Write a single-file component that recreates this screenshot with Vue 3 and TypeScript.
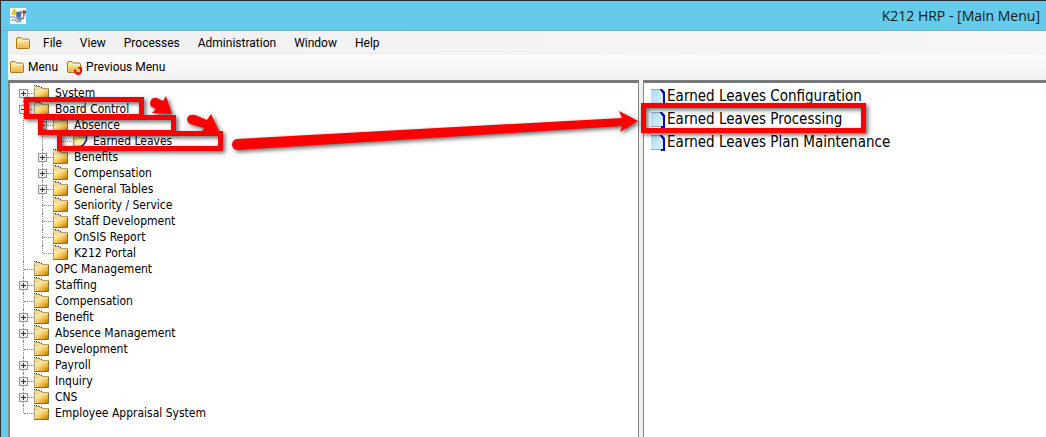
<script setup lang="ts">
interface TreeNode {
  label: string
  state?: 'open' | 'closed'
  children?: TreeNode[]
}

const menus: string[] = ['File', 'View', 'Processes', 'Administration', 'Window', 'Help']

const tree: TreeNode[] = [
  { label: 'System', state: 'closed' },
  {
    label: 'Board Control',
    state: 'open',
    children: [
      { label: 'Absence', state: 'open', children: [{ label: 'Earned Leaves' }] },
      { label: 'Benefits', state: 'closed' },
      { label: 'Compensation', state: 'closed' },
      { label: 'General Tables', state: 'closed' },
      { label: 'Seniority / Service' },
      { label: 'Staff Development' },
      { label: 'OnSIS Report' },
      { label: 'K212 Portal' },
    ],
  },
  { label: 'OPC Management' },
  { label: 'Staffing', state: 'closed' },
  { label: 'Compensation' },
  { label: 'Benefit', state: 'closed' },
  { label: 'Absence Management', state: 'closed' },
  { label: 'Development' },
  { label: 'Payroll', state: 'closed' },
  { label: 'Inquiry', state: 'closed' },
  { label: 'CNS', state: 'closed' },
  { label: 'Employee Appraisal System' },
]

const items: string[] = [
  'Earned Leaves Configuration',
  'Earned Leaves Processing',
  'Earned Leaves Plan Maintenance',
]
</script>

<template>
  <div class="window">
    <svg class="defs" width="0" height="0" aria-hidden="true">
      <defs>
        <linearGradient id="gold" x1="0" y1="0" x2="1" y2="1">
          <stop offset="0" stop-color="#fffbd8" />
          <stop offset="0.4" stop-color="#fbdc7c" />
          <stop offset="0.75" stop-color="#e5a62a" />
          <stop offset="1" stop-color="#b87400" />
        </linearGradient>
        <linearGradient id="soft" x1="0" y1="0" x2="0" y2="1">
          <stop offset="0" stop-color="#fff0a8" />
          <stop offset="1" stop-color="#e9b544" />
        </linearGradient>
        <linearGradient id="paper" x1="0" y1="0" x2="1" y2="1">
          <stop offset="0" stop-color="#acd6f8" />
          <stop offset="1" stop-color="#dff4ff" />
        </linearGradient>
        <symbol id="folder" viewBox="0 0 16 16">
          <path d="M.5 14V2.500L1.500 1.500H6L8 3.500H14.500V14Z" fill="#f3dc9a" stroke="#b39c68" />
          <path d="M1 14V6H6L8 4.500H14V14Z" fill="url(#gold)" />
          <path d="M0 14.500H14.500V4" fill="none" stroke="#85703c" />
          <path d="M0 .5H1M2 .5H3M5 1.500H6M7 2.500H8" stroke="#2222c8" />
        </symbol>
        <symbol id="folder-open" viewBox="0 0 16 16">
          <path d="M1.500 12V4L3 2.500H6L8 4H13V7L10 13H2Z" fill="#f3d56e" stroke="#a38d55" />
          <path d="M4 7L6 6H14L11 12L9 13H2Z" fill="#fff3ae" />
          <path d="M14.500 2.500V7L11.500 12L9 13.500H2" fill="none" stroke="#1313a8" stroke-width="1.500" />
        </symbol>
        <symbol id="folder-soft" viewBox="0 0 16 14">
          <path d="M1.500 12V3Q1.500 1.500 3 1.500H6L7.500 3H13Q14.500 3 14.500 4.500V11.500Q14.500 12.500 13.500 12.500H2Z" fill="url(#soft)" stroke="#a97a1c" />
          <path d="M2.500 5.500H6.500L8 4.500H13.500" fill="none" stroke="#fffadb" />
        </symbol>
        <symbol id="page" viewBox="0 0 14 16">
          <path d="M0 0H10L13 4V15H0Z" fill="url(#paper)" />
          <path d="M0 .5H9M0 14.500H11" stroke="#8faec6" />
          <path d="M9 0H11L14 3V16H10V14H12V5H9Z" fill="#0808b8" />
          <path d="M9 1V5H12Z" fill="#fff" />
        </symbol>
      </defs>
    </svg>

    <header class="titlebar">
      <svg class="app-icon" viewBox="0 0 16 16" aria-hidden="true">
        <path fill="#fff" d="M0 0H16V16H0Z" />
        <path d="M1 6L4 0L7 4L7 7L2 7Z" fill="#d8cf28" />
        <path d="M6 4L12 3L15 6L14 11L9 13L6 9Z" fill="#7b8a94" />
        <path d="M7 5L10 4L11 8L8 9Z" fill="#3268b4" />
        <path d="M11 6L13 5V9L11 10Z" fill="#e8eef0" />
        <path d="M13 2L16 3V6L13 5Z" fill="#e51c1c" />
        <path d="M0 9L5 9L8 13L12 14M1 12L5 12L8 15" fill="none" stroke="#4888d8" />
      </svg>
      <h1>K212 HRP - [Main Menu]</h1>
    </header>

    <div class="client">
      <nav class="menubar" aria-label="Main">
        <svg class="soft-folder" aria-hidden="true"><use href="#folder-soft" /></svg>
        <button v-for="m in menus" :key="m" type="button">{{ m }}</button>
      </nav>

      <div class="toolbar">
        <button type="button">
          <svg class="soft-folder" aria-hidden="true"><use href="#folder-soft" /></svg>Menu
        </button>
        <button type="button">
          <svg class="back-folder" viewBox="0 0 17 16" aria-hidden="true">
            <use href="#folder-soft" y="1" width="16" height="14" />
            <path d="M9.500 10.500A3 3 0 1 0 14.500 10" fill="none" stroke="#e81010" stroke-width="2" />
            <path d="M11 8H16V12Z" fill="#e81010" />
          </svg>Previous Menu
        </button>
      </div>

      <main class="panes">
        <section class="pane tree-pane" aria-label="Menu tree">
          <ul class="tree">
            <li v-for="a in tree" :key="a.label">
              <div class="row">
                <span class="branch"><button v-if="a.state" type="button" class="toggle" :class="a.state" :aria-label="'Toggle ' + a.label"></button></span>
                <svg class="folder" aria-hidden="true"><use href="#folder" /></svg>
                <span class="label">{{ a.label }}</span>
              </div>
              <ul v-if="a.children">
                <li v-for="b in a.children" :key="b.label">
                  <div class="row">
                    <span class="branch"><button v-if="b.state" type="button" class="toggle" :class="b.state" :aria-label="'Toggle ' + b.label"></button></span>
                    <svg class="folder" aria-hidden="true"><use href="#folder" /></svg>
                    <span class="label">{{ b.label }}</span>
                  </div>
                  <ul v-if="b.children">
                    <li v-for="c in b.children" :key="c.label">
                      <div class="row">
                        <span class="branch"></span>
                        <svg class="folder" aria-hidden="true"><use href="#folder-open" /></svg>
                        <span class="label">{{ c.label }}</span>
                      </div>
                    </li>
                  </ul>
                </li>
              </ul>
            </li>
          </ul>
        </section>
        <section class="pane list-pane" aria-label="Programs">
          <ul class="programs">
            <li v-for="i in items" :key="i">
              <svg class="page" aria-hidden="true"><use href="#page" /></svg>
              <a href="#">{{ i }}</a>
            </li>
          </ul>
        </section>
      </main>
    </div>

    <svg class="marks" width="900" height="170" aria-hidden="true">
      <g fill="none" stroke="#fb0000" stroke-width="5">
        <rect x="26.5" y="99.5" width="115" height="17" />
        <rect x="40.5" y="117.5" width="133" height="15" />
        <rect x="59.5" y="133.5" width="161" height="15" />
        <rect x="643.5" y="105.5" width="220" height="25" />
      </g>
      <g fill="#fb0000">
        <path d="M150 103Q151 97 157 98L163 101L166 96L172 114L152 113L156 109L152 107Q150 106 150 103Z" />
        <path d="M187 119Q188 114 195 115L207 120L211 114L219 131L201 133L204 128L190 124Q187 122 187 119Z" />
        <path d="M237 139L622 118L619 111L638 121L620 132L622 126L238 150A5.500 5.500 0 0 1 237 139Z" />
      </g>
    </svg>
  </div>
</template>

<style scoped>
.window {
  position: relative;
  display: flex;
  flex-direction: column;
  min-height: 100vh;
  box-sizing: border-box;
  border-top: 1px solid #2b3036;
  border-left: 1px solid #2b3036;
  background: #66caea;
  color: #000;
  overflow: hidden;
}
.defs { position: absolute; }
ul { list-style: none; margin: 0; padding: 0; }
button {
  border: 0;
  padding: 0;
  background: none;
  color: inherit;
  font: inherit;
}
.titlebar {
  display: flex;
  align-items: center;
  justify-content: space-between;
  height: 29px;
  padding: 0 6px 0 9px;
  border-bottom: 1px solid #78aec6;
}
.app-icon { width: 16px; height: 16px; }
.titlebar h1 {
  margin: 0;
  color: #101c20;
  font: 400 14px/20px "Open Sans", "Noto Sans", sans-serif;
}
.client {
  display: flex;
  flex-direction: column;
  flex: 1;
  margin-left: 7px;
  font: 12px/16px Roboto, "Noto Sans", sans-serif;
}
.menubar {
  display: flex;
  align-items: center;
  gap: 18px;
  height: 24px;
  padding-left: 7px;
  background: linear-gradient(90deg, #f0f0f0, #f6f6f6);
}
.menubar .soft-folder { margin-right: -6px; }
.soft-folder { width: 16px; height: 14px; }
.back-folder { width: 17px; height: 16px; }
.toolbar {
  display: flex;
  align-items: center;
  gap: 8px;
  height: 25px;
  box-sizing: border-box;
  padding: 0 0 2px 1px;
  background: linear-gradient(#fdfdfd, #f0f0f0);
}
.toolbar button { display: flex; align-items: center; gap: 3px; }
.panes {
  display: flex;
  gap: 4px;
  flex: 1;
  background: #f0f0f0;
}
.pane {
  box-sizing: border-box;
  border-top: 3px solid #77797d;
  border-left: 2px solid #85878c;
  background: #fff;
}
.tree-pane {
  width: 60.8%;
  padding: 2px 0 0 9px;
  border-right: 1px solid #85878c;
  font: 12px/16px "DejaVu Sans Condensed", "Noto Sans", sans-serif;
}
.list-pane { flex: 1; border-left-width: 1px; padding: 2px 0 0 7px; }
.tree li { position: relative; }
.tree li::before {
  content: "";
  position: absolute;
  left: 4px;
  top: 0;
  bottom: 0;
  border-left: 1px dotted #8a8a8a;
}
.tree li:first-child::before { top: 8px; }
.tree ul > li:first-child::before { top: 0; }
.tree li:last-child::before { bottom: auto; height: 8px; }
.tree ul { margin-left: 19px; }
.row { display: flex; align-items: center; height: 16px; }
.branch {
  position: relative;
  display: flex;
  align-items: center;
  width: 15px;
  height: 16px;
}
.branch::after {
  content: "";
  flex: 1;
  border-top: 1px dotted #8a8a8a;
}
.branch:not(:has(.toggle))::after { margin-left: 5px; }
.toggle {
  position: relative;
  width: 9px;
  height: 9px;
  box-sizing: border-box;
  border: 1px solid #969696;
  background:
    linear-gradient(#333, #333) center / 5px 1px no-repeat,
    #ececec;
}
.toggle.closed {
  background:
    linear-gradient(#333, #333) center / 5px 1px no-repeat,
    linear-gradient(#333, #333) center / 1px 5px no-repeat,
    #ececec;
}
.folder { width: 16px; height: 16px; margin-right: 5px; }
.label { white-space: nowrap; }
.programs {
  font: 15px/23px "DejaVu Sans Condensed", "Noto Sans", sans-serif;
}
.programs li { display: flex; align-items: center; gap: 2px; height: 23px; }
.programs a { color: #000; text-decoration: none; white-space: nowrap; }
.page { width: 14px; height: 16px; }
.marks {
  position: absolute;
  left: -1px;
  top: -1px;
  pointer-events: none;
  filter: drop-shadow(2px 2px 2px rgb(0 0 0 / 0.6));
}
</style>

<style>
body { margin: 0; }
</style>
